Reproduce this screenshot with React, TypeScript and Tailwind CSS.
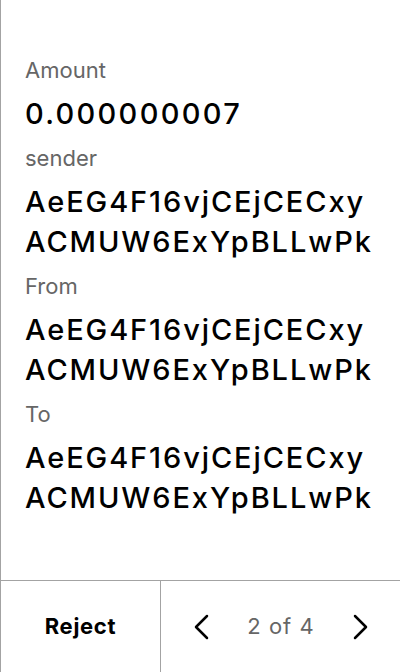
import React from 'react';

const Field: React.FC<{ label: string; lines: string[]; amount?: boolean }> = ({ label, lines, amount }) => (
  <div className="flex flex-col">
    <span className="text-[22px] leading-[28px] text-[#666666]">{label}</span>
    <div className="mt-[10px] flex flex-col">
      {lines.map((line) => (
        <span
          key={line}
          className={
            amount
              ? 'text-[29px] leading-[40px] font-medium text-black tracking-[2.3px]'
              : 'text-[29px] leading-[40px] font-medium text-black tracking-[1.9px]'
          }
        >
          {line}
        </span>
      ))}
    </div>
  </div>
);

const Chevron: React.FC<{ dir: 'left' | 'right' }> = ({ dir }) => (
  <svg width="18" height="28" viewBox="0 0 18 28" fill="none">
    <path
      d={dir === 'left' ? 'M15 3 L4 14 L15 25' : 'M3 3 L14 14 L3 25'}
      stroke="black"
      strokeWidth="2.5"
      strokeLinecap="round"
      strokeLinejoin="round"
    />
  </svg>
);

const ADDR = ['AeEG4F16vjCEjCECxy', 'ACMUW6ExYpBLLwPk'];

export default function App() {
  return (
    <div
      className="w-[400px] h-[672px] flex flex-col bg-white border-l border-[#a3a3a3]"
      style={{ fontFamily: 'Inter, "Noto Sans", sans-serif' }}
    >
      <div className="flex-1 flex flex-col gap-[10px] pl-[24px] pt-[56px]">
        <Field label="Amount" lines={['0.000000007']} amount />
        <Field label="sender" lines={ADDR} />
        <Field label="From" lines={ADDR} />
        <Field label="To" lines={ADDR} />
      </div>
      <div className="h-[92px] flex border-t border-[#a3a3a3]">
        <button className="w-[159px] flex items-center justify-center text-[22px] font-bold tracking-[0.7px] text-black">
          Reject
        </button>
        <div className="flex-1 flex items-center justify-between border-l border-[#a3a3a3] pl-[31px] pr-[30px]">
          <Chevron dir="left" />
          <span className="text-[22px] tracking-[1px] text-[#666666]">2 of 4</span>
          <Chevron dir="right" />
        </div>
      </div>
    </div>
  );
}
